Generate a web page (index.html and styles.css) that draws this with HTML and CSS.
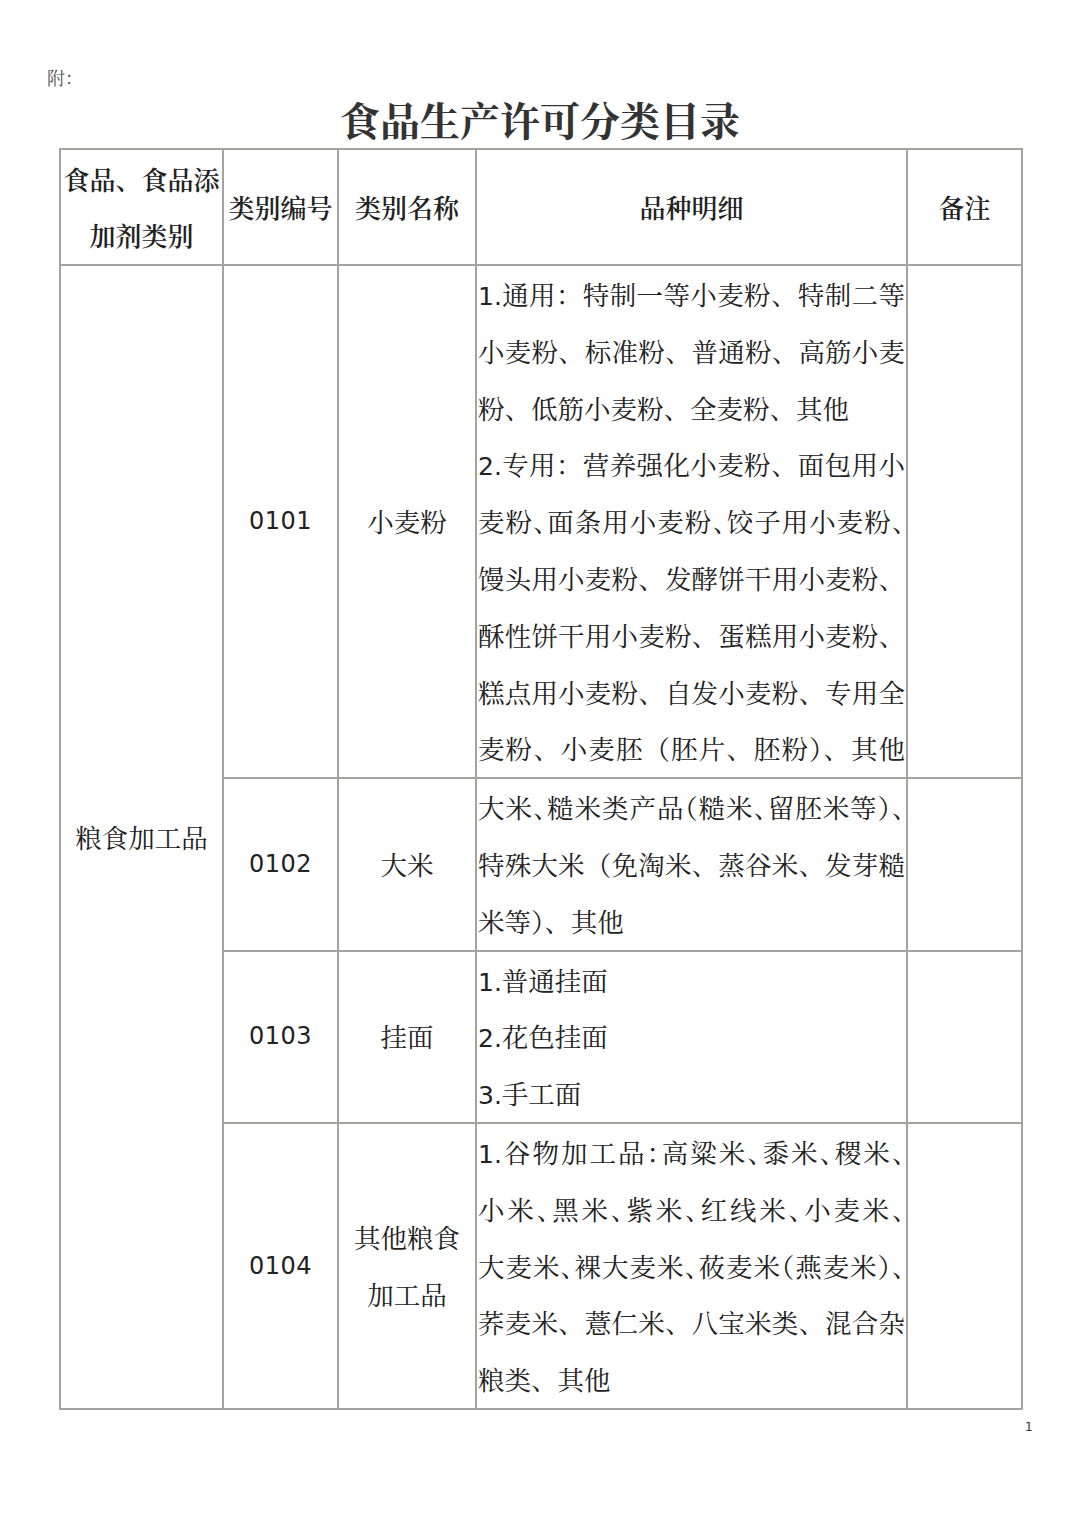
FILE: index.html
```html
<!DOCTYPE html>
<html lang="zh-CN">
<head>
<meta charset="utf-8">
<title>食品生产许可分类目录</title>
<link rel="stylesheet" href="styles.css">
</head>
<body>
<div class="page">
  <div class="attach">附：</div>
  <h1 class="title">食品生产许可分类目录</h1>
  <table class="catalog">
    <colgroup>
      <col class="c1"><col class="c2"><col class="c3"><col class="c4"><col class="c5">
    </colgroup>
    <thead>
      <tr>
        <th>食品、食品添<br>加剂类别</th>
        <th>类别编号</th>
        <th>类别名称</th>
        <th>品种明细</th>
        <th>备注</th>
      </tr>
    </thead>
    <tbody>
      <tr class="r1">
        <td class="cat" rowspan="4">粮食加工品</td>
        <td class="code">0101</td>
        <td class="name">小麦粉</td>
        <td class="detail">
          <span class="ln full"><span class="num">1.</span>通用：特制一等小麦粉、特制二等</span>
          <span class="ln full">小麦粉、标准粉、普通粉、高筋小麦</span>
          <span class="ln">粉、低筋小麦粉、全麦粉、其他</span>
          <span class="ln full"><span class="num">2.</span>专用：营养强化小麦粉、面包用小</span>
          <span class="ln full halt">麦粉、面条用小麦粉、饺子用小麦粉、</span>
          <span class="ln full">馒头用小麦粉、发酵饼干用小麦粉、</span>
          <span class="ln full">酥性饼干用小麦粉、蛋糕用小麦粉、</span>
          <span class="ln full">糕点用小麦粉、自发小麦粉、专用全</span>
          <span class="ln full">麦粉、小麦胚（胚片、胚粉）、其他</span>
        </td>
        <td class="note"></td>
      </tr>
      <tr class="r2">
        <td class="code">0102</td>
        <td class="name">大米</td>
        <td class="detail">
          <span class="ln full halt">大米、糙米类产品（糙米、留胚米等）、</span>
          <span class="ln full">特殊大米（免淘米、蒸谷米、发芽糙</span>
          <span class="ln">米等）、其他</span>
        </td>
        <td class="note"></td>
      </tr>
      <tr class="r3">
        <td class="code">0103</td>
        <td class="name">挂面</td>
        <td class="detail">
          <span class="ln"><span class="num">1.</span>普通挂面</span>
          <span class="ln"><span class="num">2.</span>花色挂面</span>
          <span class="ln"><span class="num">3.</span>手工面</span>
        </td>
        <td class="note"></td>
      </tr>
      <tr class="r4">
        <td class="code">0104</td>
        <td class="name">其他粮食<br>加工品</td>
        <td class="detail">
          <span class="ln full halt"><span class="num">1.</span>谷物加工品：高粱米、黍米、稷米、</span>
          <span class="ln full halt">小米、黑米、紫米、红线米、小麦米、</span>
          <span class="ln full halt">大麦米、裸大麦米、莜麦米（燕麦米）、</span>
          <span class="ln full">荞麦米、薏仁米、八宝米类、混合杂</span>
          <span class="ln">粮类、其他</span>
        </td>
        <td class="note"></td>
      </tr>
    </tbody>
  </table>
  <div class="pageno">1</div>
</div>
</body>
</html>
```

FILE: styles.css
```css
html, body {
  margin: 0;
  padding: 0;
  background: #ffffff;
}

body {
  font-family: "Noto Serif CJK SC", "Noto Sans CJK SC", "DejaVu Sans", sans-serif;
  color: #1e1e1e;
}

.page {
  width: 1080px;
  height: 1527px;
  box-sizing: border-box;
  padding: 65px 0 0 59px;
  position: relative;
}

.attach {
  font-size: 18px;
  line-height: 24px;
  color: #555555;
  margin-left: -12px;
  height: 24px;
}

.title {
  margin: 5px 0 0 0;
  width: 962px;
  text-align: center;
  font-size: 40px;
  line-height: 49px;
  font-weight: 700;
  color: #333333;
  letter-spacing: 0;
}

.catalog {
  margin-top: 5px;
  border-collapse: collapse;
  table-layout: fixed;
  width: 962px;
}

.c1 { width: 163px; }
.c2 { width: 115px; }
.c3 { width: 138px; }
.c4 { width: 431px; }
.c5 { width: 115px; }

.catalog th,
.catalog td {
  border: 2px solid #a3a39f;
  padding: 0;
  vertical-align: middle;
  text-align: center;
}

.catalog th {
  font-size: 26px;
  line-height: 56px;
  font-weight: 600;
  color: #222222;
  height: 114px;
  padding: 0;
}

.catalog td {
  font-size: 26.5px;
  line-height: 56.8px;
  font-weight: 400;
  color: #222222;
}

.code {
  font-family: "DejaVu Sans", "Noto Sans CJK SC", sans-serif;
  font-size: 24px !important;
  letter-spacing: 0.5px;
}

.detail {
  text-align: left !important;
  padding: 0 1px 0 1px !important;
}

.ln {
  display: block;
  text-align: left;
  height: 56.8px;
}

.ln.full {
  text-align: justify;
  text-align-last: justify;
}

.ln.halt {
  font-feature-settings: "halt";
}

.num {
  font-family: "DejaVu Sans", sans-serif;
  font-size: 25px;
}

.pageno {
  position: absolute;
  left: 1025px;
  top: 1420px;
  font-family: "DejaVu Sans", sans-serif;
  font-size: 12px;
  color: #333333;
}
```
